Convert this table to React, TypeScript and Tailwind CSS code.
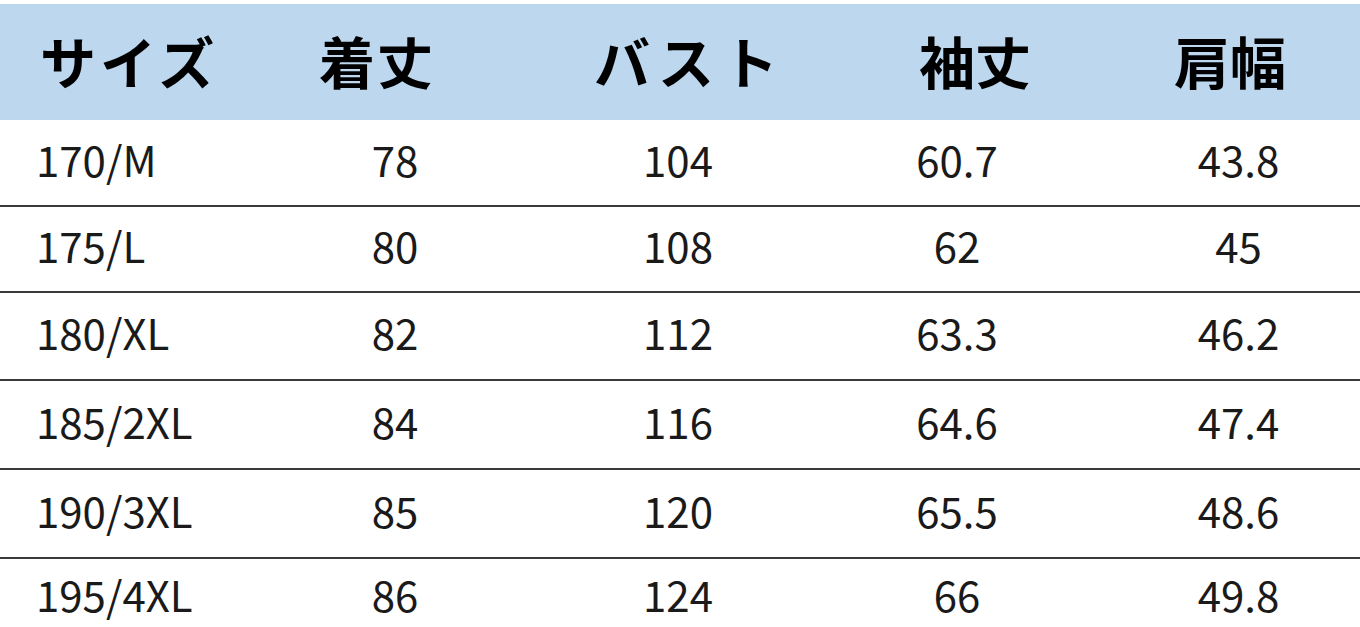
const rows = [
  ["170/M", "78", "104", "60.7", "43.8"],
  ["175/L", "80", "108", "62", "45"],
  ["180/XL", "82", "112", "63.3", "46.2"],
  ["185/2XL", "84", "116", "64.6", "47.4"],
  ["190/3XL", "85", "120", "65.5", "48.6"],
  ["195/4XL", "86", "124", "66", "49.8"],
];

const heights = ["h-[87px]", "h-[86px]", "h-[88px]", "h-[89px]", "h-[89px]", "h-[70px]"];

const cjk = "font-['Noto_Sans_CJK_JP','Noto_Sans',sans-serif]";

export default function App() {
  return (
    <div className={`h-[627px] w-[1360px] overflow-hidden bg-white pt-1 text-[#1a1a1a] ${cjk}`}>
      {/* header */}
      <div className="grid h-[116px] grid-cols-[254px_246px_380px_190px_1fr] items-center bg-[#bdd7ee] pb-1 text-[56px] font-bold leading-none text-black">
        <div className="pl-[40px] tracking-[4px]">サイズ</div>
        <div className="text-center tracking-[2px]">着丈</div>
        <div className="text-center tracking-[8px]">バスト</div>
        <div className="text-center">袖丈</div>
        <div className="pl-[30px] text-center">肩幅</div>
      </div>

      {rows.map((row, i) => (
        <div
          key={row[0]}
          className={`grid grid-cols-[255px_280px_286px_272px_1fr] items-center text-[42px] leading-none ${heights[i]} ${
            i === rows.length - 1 ? "pb-0" : "border-b-2 border-[#3a3a3a] pb-2"
          }`}
        >
          <div className="pl-[36px]">{row[0]}</div>
          <div className="text-center">{row[1]}</div>
          <div className="text-center">{row[2]}</div>
          <div className="text-center">{row[3]}</div>
          <div className="pl-[24px] text-center">{row[4]}</div>
        </div>
      ))}
    </div>
  );
}
